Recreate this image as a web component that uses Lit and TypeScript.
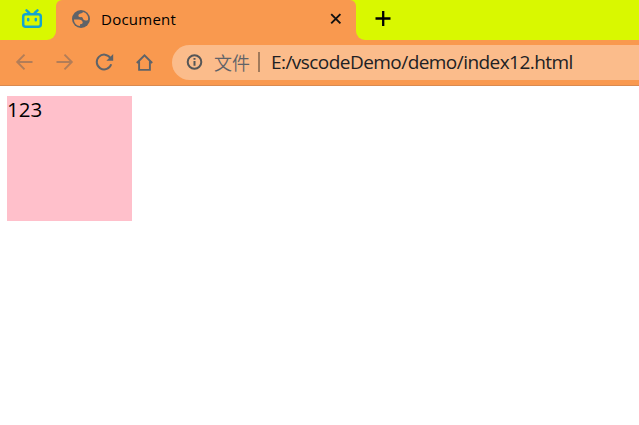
import { LitElement, html, css } from "lit";
import { customElement } from "lit/decorators.js";

@customElement("app-root")
export class AppRoot extends LitElement {
  static styles = css`
    :host {
      display: block;
      width: 100%;
      height: 425px;
      overflow: hidden;
      background: #fff;
      font-family: "Open Sans", "Noto Sans", "Noto Sans CJK SC", sans-serif;
      color: #000;
    }
    * { box-sizing: border-box; }
    svg { display: block; flex: none; }
    .strip { display: flex; height: 40px; background: #f9994f; }
    .pinned {
      width: 56px;
      padding: 8px 0 0 21px;
      background: #d9f800;
      border-bottom-right-radius: 9px;
    }
    .tab-wrap { width: 300px; background: #d9f800; }
    .tab {
      display: flex;
      align-items: center;
      height: 40px;
      padding: 0 13px 2px 15px;
      background: #f9994f;
      border-radius: 6px 6px 0 0;
    }
    .title {
      flex: 1;
      margin-left: 10px;
      font-size: 15px;
      line-height: 20px;
      letter-spacing: 0.25px;
      white-space: nowrap;
    }
    .rest {
      flex: 1;
      padding: 11px 0 0 19px;
      background: #d9f800;
      border-bottom-left-radius: 9px;
    }
    .toolbar {
      display: flex;
      align-items: center;
      height: 46px;
      padding-left: 14px;
      background: #f9994f;
      border-bottom: 1px solid #d98a50;
    }
    .nav { display: flex; gap: 20px; width: 158px; padding-bottom: 1px; }
    .address {
      display: flex;
      align-items: center;
      flex: 1;
      height: 35px;
      padding: 0 0 1px 14px;
      background: #fbbc8b;
      border-radius: 18px 0 0 18px;
      white-space: nowrap;
      line-height: 26px;
    }
    .scheme {
      margin-left: 10px;
      font: 350 18px/26px "Noto Sans CJK SC", sans-serif;
      color: #5f6368;
    }
    .rule { width: 2px; height: 20px; margin: 0 11px 0 8px; background: #a17a5b; }
    .url { font-size: 19px; letter-spacing: -0.55px; color: #202124; }
    .page { padding: 10px 7px; }
    .box {
      width: 125px;
      height: 125px;
      background: #ffc0cb;
      font-size: 20.5px;
      line-height: 27px;
    }
  `;

  render() {
    return html`
      <div class="strip">
        <div class="pinned">
          <svg width="22" height="21" viewBox="0 0 22 21" fill="none" stroke="#12a5cf" stroke-width="2.5" stroke-linecap="round">
            <rect x="2.2" y="6.2" width="17.6" height="12.6" rx="2.5" />
            <path d="M5.5 2.3L8.3 5M16.5 2.3L13.7 5M7.2 11v1.2M14.8 11v1.2" />
          </svg>
        </div>
        <div class="tab-wrap">
          <div class="tab">
            <svg width="20" height="20" viewBox="0 0 20 20">
              <circle cx="10" cy="10" r="9" fill="#5f6368" />
              <path fill="#f9994f" d="M12 3.1C11.6 4.8 7.6 4.2 7.4 6.5c-.1 1.6 1.3 1.7 2.7 1.6 1.9-.1 1.6 1.8 2.5 2.7 1 1 3 .9 4.4.2.8-3.6-1.3-7-5-7.9zM3 10.6c-.1 3.5 2.5 6.4 6 6.5v-1.9c1.7.1 2.8-.5 2.7-1.9-.1-1.8-1.9-2.9-4.2-2.9z" />
            </svg>
            <span class="title">Document</span>
            <svg width="14" height="14" viewBox="0 0 14 14" stroke="#111" stroke-width="1.9"><path d="M2.2 2.2l9.2 9.2M11.4 2.2l-9.2 9.2" /></svg>
          </div>
        </div>
        <div class="rest">
          <svg width="16" height="16" viewBox="0 0 16 16" stroke="#000" stroke-width="2.3"><path d="M.5 7.5h15M8.2 0v15" /></svg>
        </div>
      </div>
      <div class="toolbar">
        <div class="nav">
          <svg width="20" height="20" viewBox="0 0 20 20" fill="none" stroke="#b27d58" stroke-width="1.9"><path d="M18.5 10H4M10.5 2.7L3.2 10l7.3 7.3" /></svg>
          <svg width="20" height="20" viewBox="0 0 20 20" fill="none" stroke="#b27d58" stroke-width="1.9"><path d="M2.5 10H17M10.5 2.7l7.3 7.3-7.3 7.3" /></svg>
          <svg width="20" height="20" viewBox="0 0 20 20" fill="none" stroke="#5f6368" stroke-width="2"><path d="M16.4 6A7.4 7.4 0 1 0 17.2 12.3" /><path d="M19.2 2v6.8h-6.8z" fill="#5f6368" stroke="none" /></svg>
          <svg width="20" height="20" viewBox="0 0 20 20" fill="none" stroke="#5f6368" stroke-width="1.9"><path d="M2.8 11L10.5 3.3l7.7 7.7M5.1 9.5v8.4h10.8V9.5" /></svg>
        </div>
        <div class="address">
          <svg width="18" height="18" viewBox="0 0 18 18" fill="none" stroke="#555657" stroke-width="2"><circle cx="8.5" cy="9" r="6.8" /><path d="M8.5 8v4.7M8.5 5v1.8" /></svg>
          <span class="scheme">文件</span>
          <span class="rule"></span>
          <span class="url">E:/vscodeDemo/demo/index12.html</span>
        </div>
      </div>
      <div class="page"><div class="box">123</div></div>
    `;
  }
}
